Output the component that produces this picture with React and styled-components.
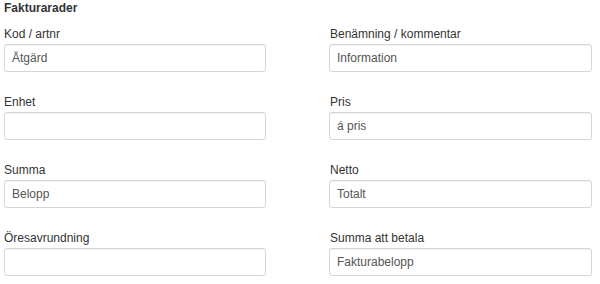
import React from "react";
import styled, { createGlobalStyle } from "styled-components";

const Global = createGlobalStyle`
  html, body { margin: 0; padding: 0; background: #fff; }
  body { font-family: "Liberation Sans", Arial, sans-serif; color: #333; }
  * { box-sizing: border-box; }
`;

const Panel = styled.section`
  padding: 0 0 0 4px;
  width: 600px;
`;

const Heading = styled.h4`
  margin: 0 0 9px 0;
  font-size: 12px;
  line-height: 17px;
  font-weight: bold;
  color: #333;
`;

const Grid = styled.div`
  display: grid;
  grid-template-columns: 262px 263px;
  column-gap: 63px;
`;

const Field = styled.div`
  display: flex;
  flex-direction: column;
  margin-bottom: 22px;
`;

const Label = styled.label`
  font-size: 12px;
  line-height: 17px;
  color: #333;
  margin-bottom: 1px;
  padding-left: ${(p) => p.$indent || 0}px;
`;

const Input = styled.input`
  height: 28px;
  width: 100%;
  padding: 0 7px;
  font-family: "Liberation Sans", Arial, sans-serif;
  font-size: 12px;
  color: #555;
  background: #fff;
  border: 1px solid #d5d5d5;
  border-radius: 3px;
  box-shadow: inset 0 1px 1px rgba(0, 0, 0, 0.05);
  outline: none;
`;

const fields = [
  { label: "Kod / artnr", value: "Åtgärd" },
  { label: "Benämning / kommentar", value: "Information", indent: 1 },
  { label: "Enhet", value: "" },
  { label: "Pris", value: "á pris", indent: 1 },
  { label: "Summa", value: "Belopp" },
  { label: "Netto", value: "Totalt", indent: 1 },
  { label: "Öresavrundning", value: "" },
  { label: "Summa att betala", value: "Fakturabelopp", indent: 1 },
];

export default function App() {
  return (
    <>
      <Global />
      <Panel>
        <Heading>Fakturarader</Heading>
        <Grid>
          {fields.map((f, i) => (
            <Field key={i}>
              <Label $indent={f.indent}>{f.label}</Label>
              <Input readOnly value={f.value} />
            </Field>
          ))}
        </Grid>
      </Panel>
    </>
  );
}
